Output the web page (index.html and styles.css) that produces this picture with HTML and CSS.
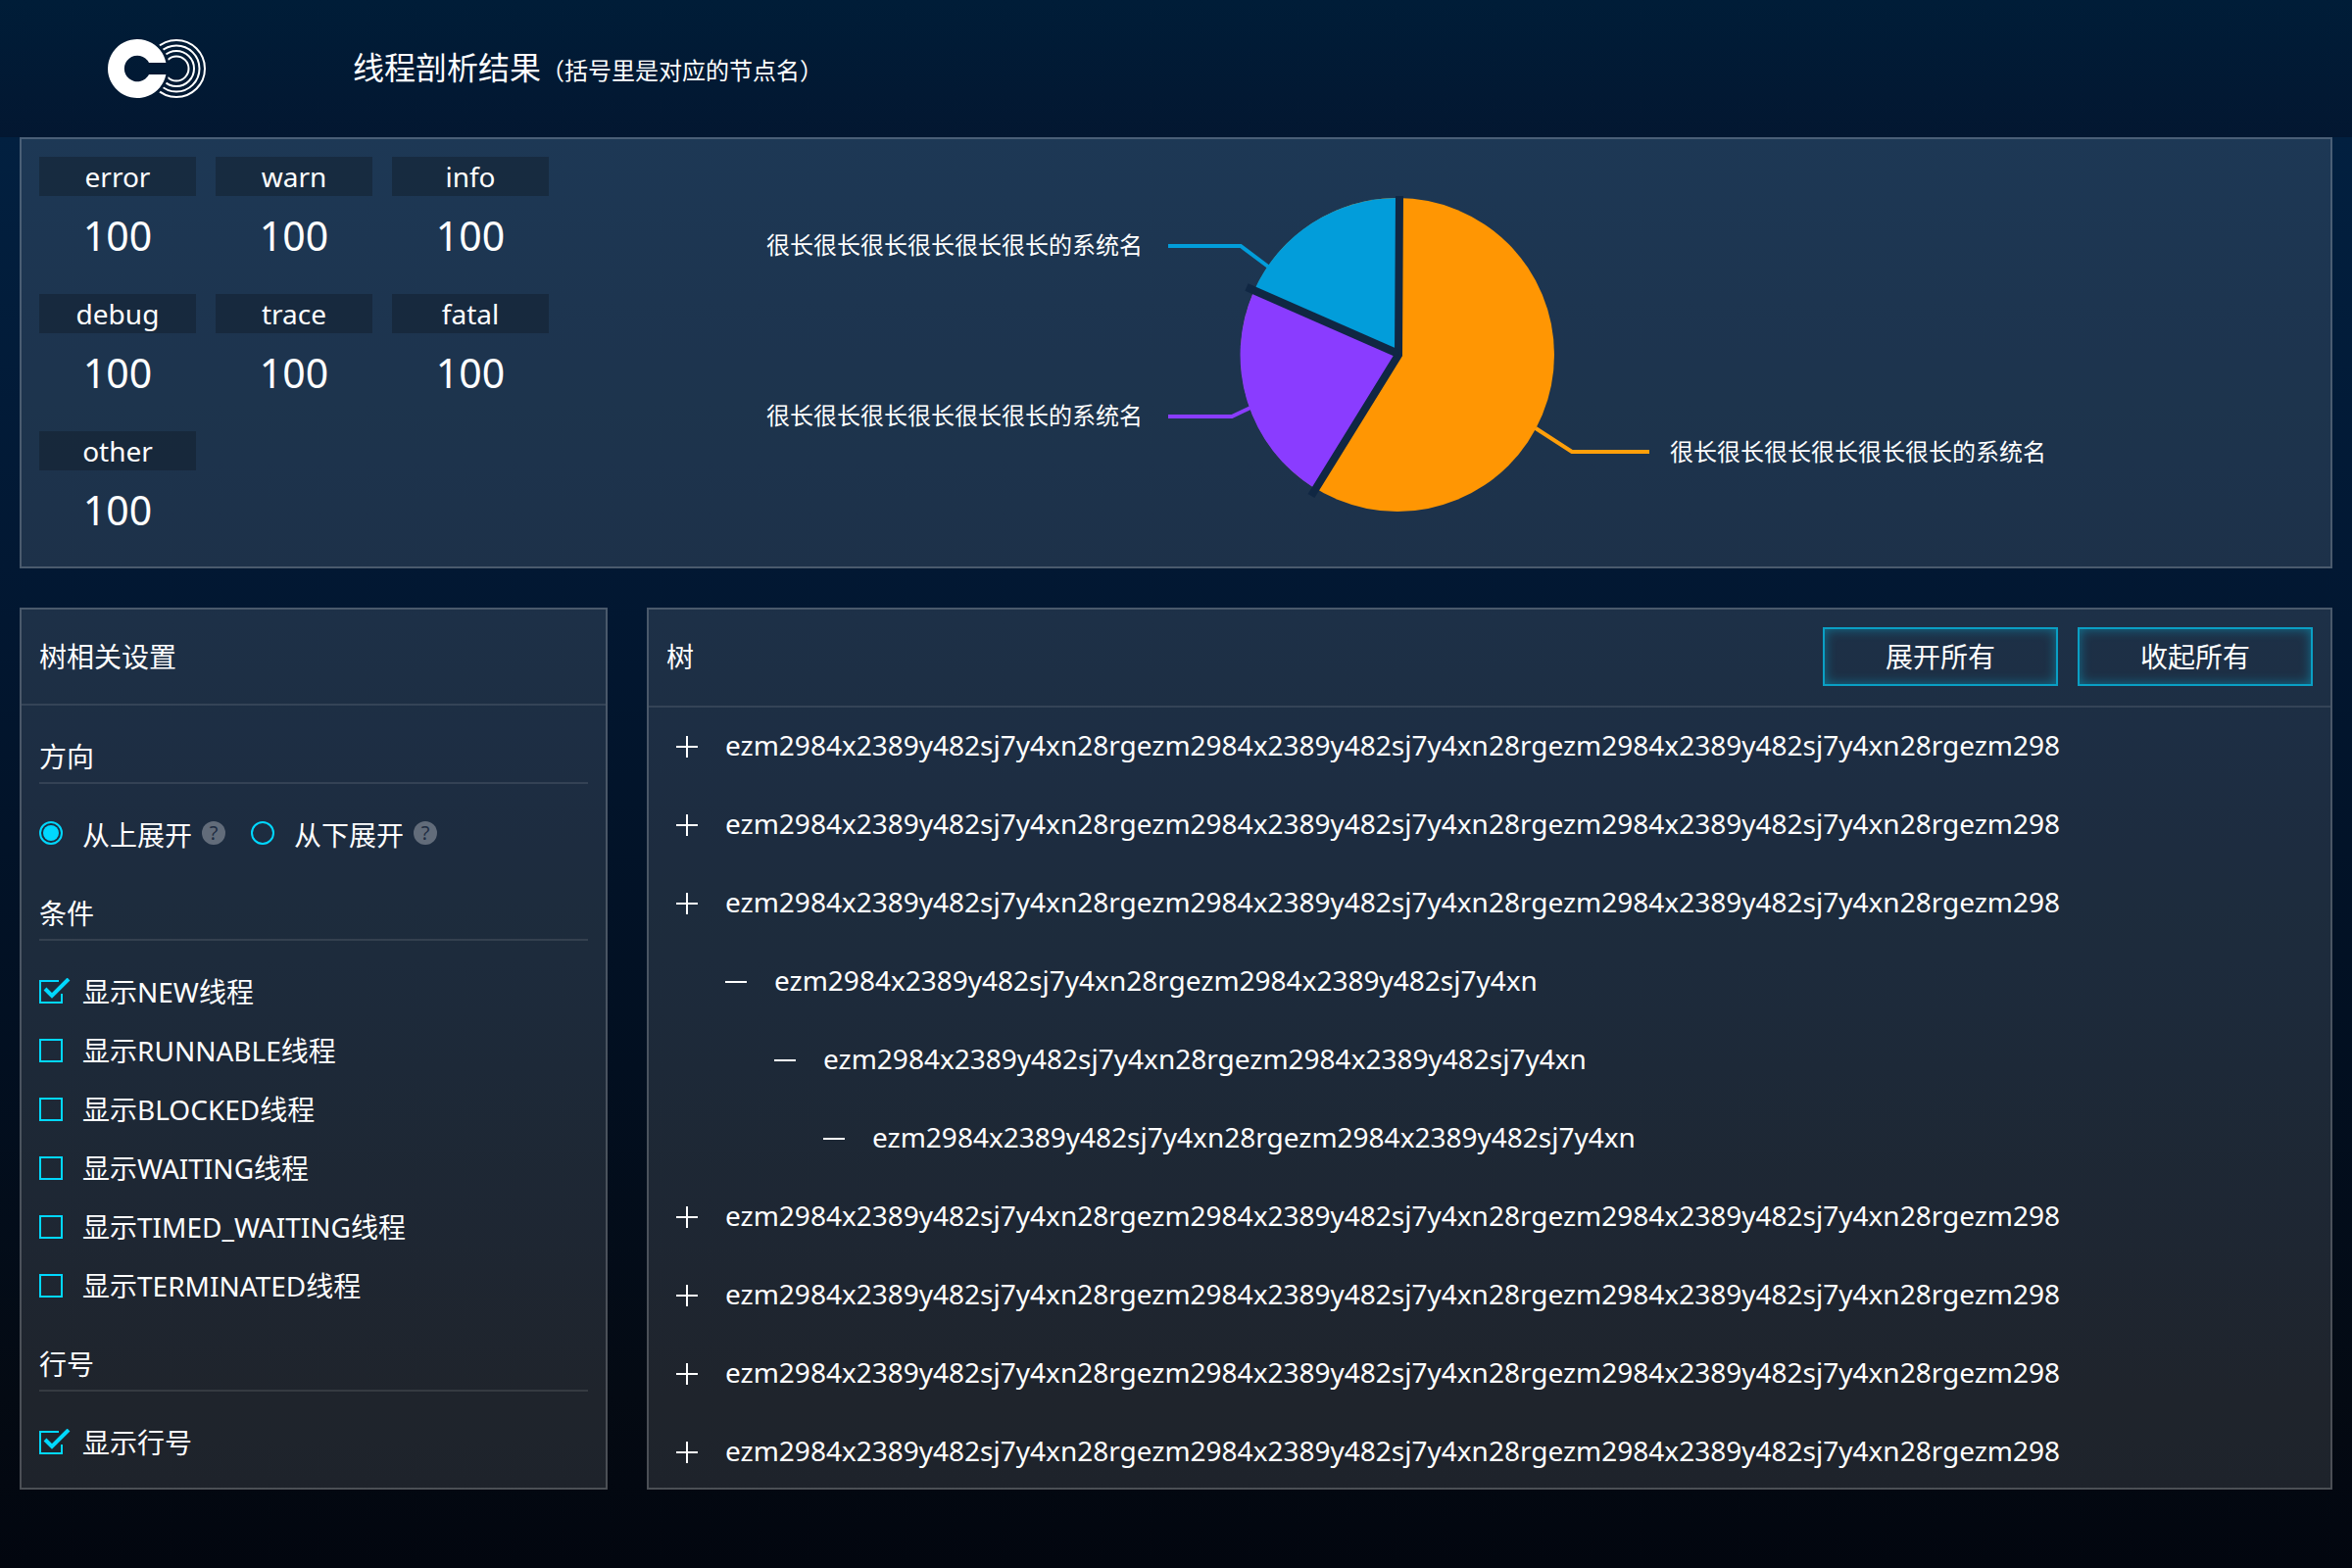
FILE: index.html
```html
<!DOCTYPE html>
<html lang="zh-CN">
<head>
<meta charset="utf-8">
<meta name="viewport" content="width=device-width, initial-scale=1">
<title>线程剖析结果</title>
<link rel="stylesheet" href="styles.css">
</head>
<body>
<header class="topbar">
  <svg class="logo" viewBox="0 0 100 60" aria-hidden="true">
    <defs>
      <mask id="ring-cut">
        <rect width="100" height="60" fill="#fff"/>
        <circle cx="30" cy="30" r="33" fill="#000"/>
      </mask>
    </defs>
    <path fill="#fff" d="M59.4 24A30 30 0 1 0 59.4 36H42A13.3 13.3 0 1 1 42 24Z"/>
    <g mask="url(#ring-cut)" fill="none" stroke="#fff" stroke-width="2">
      <circle cx="70" cy="30" r="29"/>
      <circle cx="70" cy="30" r="23.5"/>
      <circle cx="70" cy="30" r="18"/>
      <circle cx="70" cy="30" r="12.5"/>
    </g>
  </svg>
  <h1 class="title">线程剖析结果<span class="subtitle"><span class="paren" lang="zh-TW">（</span>括号里是对应的节点名<span class="paren" lang="zh-TW">）</span></span></h1>
</header>

<main class="content">
  <section class="panel overview">
    <dl class="stats">
      <div class="stat"><dt>error</dt><dd>100</dd></div>
      <div class="stat"><dt>warn</dt><dd>100</dd></div>
      <div class="stat"><dt>info</dt><dd>100</dd></div>
      <div class="stat"><dt>debug</dt><dd>100</dd></div>
      <div class="stat"><dt>trace</dt><dd>100</dd></div>
      <div class="stat"><dt>fatal</dt><dd>100</dd></div>
      <div class="stat"><dt>other</dt><dd>100</dd></div>
    </dl>
    <div class="chart">
      <svg class="pie" viewBox="780 160 1320 400" role="img" aria-label="系统占比">
        <circle cx="1426" cy="362" r="160" fill="#ff9603"/>
        <path fill="#8a3cff" d="M1426 362L1341 498A160 160 0 0 1 1279 298Z"/>
        <path fill="#029dda" d="M1426 362L1279 298A160 160 0 0 1 1428 202Z"/>
        <g fill="none" stroke="#102743" stroke-width="8">
          <path d="M1428 200L1427 362L1338 506"/>
          <path d="M1427 361L1272 293"/>
        </g>
        <g fill="none" stroke-width="4">
          <path stroke="#029dda" d="M1192 251H1266L1294 272"/>
          <path stroke="#8a3cff" d="M1192 425H1257L1276 416"/>
          <path stroke="#ff9f0a" d="M1567 437L1604 461H1683"/>
        </g>
        <text class="pie-label" x="782" y="259">很长很长很长很长很长很长的系统名</text>
        <text class="pie-label" x="782" y="433">很长很长很长很长很长很长的系统名</text>
        <text class="pie-label" x="1704" y="470">很长很长很长很长很长很长的系统名</text>
      </svg>
    </div>
  </section>

  <div class="columns">
    <form class="panel settings">
      <div class="panel-head"><h2>树相关设置</h2></div>
      <div class="settings-body">
        <h3 class="group-title">方向</h3>
        <div class="group radios">
          <label class="option"><input class="radio" type="radio" name="direction" checked>从上展开<span class="help">?</span></label>
          <label class="option"><input class="radio" type="radio" name="direction">从下展开<span class="help">?</span></label>
        </div>
        <h3 class="group-title">条件</h3>
        <div class="group">
          <label class="option"><input class="check" type="checkbox" checked>显示NEW线程</label>
          <label class="option"><input class="check" type="checkbox">显示RUNNABLE线程</label>
          <label class="option"><input class="check" type="checkbox">显示BLOCKED线程</label>
          <label class="option"><input class="check" type="checkbox">显示WAITING线程</label>
          <label class="option"><input class="check" type="checkbox">显示TIMED_WAITING线程</label>
          <label class="option"><input class="check" type="checkbox">显示TERMINATED线程</label>
        </div>
        <h3 class="group-title">行号</h3>
        <div class="group">
          <label class="option"><input class="check" type="checkbox" checked>显示行号</label>
        </div>
      </div>
    </form>

    <section class="panel tree-panel">
      <div class="panel-head">
        <h2>树</h2>
        <div class="actions">
          <button class="action" type="button">展开所有</button>
          <button class="action" type="button">收起所有</button>
        </div>
      </div>
      <ul class="tree">
        <li><div class="node"><button class="toggle plus" type="button" aria-label="展开"></button>ezm2984x2389y482sj7y4xn28rgezm2984x2389y482sj7y4xn28rgezm2984x2389y482sj7y4xn28rgezm298</div></li>
        <li><div class="node"><button class="toggle plus" type="button" aria-label="展开"></button>ezm2984x2389y482sj7y4xn28rgezm2984x2389y482sj7y4xn28rgezm2984x2389y482sj7y4xn28rgezm298</div></li>
        <li><div class="node"><button class="toggle plus" type="button" aria-label="展开"></button>ezm2984x2389y482sj7y4xn28rgezm2984x2389y482sj7y4xn28rgezm2984x2389y482sj7y4xn28rgezm298</div>
          <ul class="branch">
            <li><div class="node"><button class="toggle" type="button" aria-label="收起"></button>ezm2984x2389y482sj7y4xn28rgezm2984x2389y482sj7y4xn</div>
              <ul class="branch">
                <li><div class="node"><button class="toggle" type="button" aria-label="收起"></button>ezm2984x2389y482sj7y4xn28rgezm2984x2389y482sj7y4xn</div>
                  <ul class="branch">
                    <li><div class="node"><button class="toggle" type="button" aria-label="收起"></button>ezm2984x2389y482sj7y4xn28rgezm2984x2389y482sj7y4xn</div></li>
                  </ul>
                </li>
              </ul>
            </li>
          </ul>
        </li>
        <li><div class="node"><button class="toggle plus" type="button" aria-label="展开"></button>ezm2984x2389y482sj7y4xn28rgezm2984x2389y482sj7y4xn28rgezm2984x2389y482sj7y4xn28rgezm298</div></li>
        <li><div class="node"><button class="toggle plus" type="button" aria-label="展开"></button>ezm2984x2389y482sj7y4xn28rgezm2984x2389y482sj7y4xn28rgezm2984x2389y482sj7y4xn28rgezm298</div></li>
        <li><div class="node"><button class="toggle plus" type="button" aria-label="展开"></button>ezm2984x2389y482sj7y4xn28rgezm2984x2389y482sj7y4xn28rgezm2984x2389y482sj7y4xn28rgezm298</div></li>
        <li><div class="node"><button class="toggle plus" type="button" aria-label="展开"></button>ezm2984x2389y482sj7y4xn28rgezm2984x2389y482sj7y4xn28rgezm2984x2389y482sj7y4xn28rgezm298</div></li>
      </ul>
    </section>
  </div>
</main>
</body>
</html>
```

FILE: styles.css
```css
* {
  box-sizing: border-box;
}

body {
  margin: 0;
  min-height: 100vh;
  display: flex;
  flex-direction: column;
  background: #02060f;
  color: #fff;
  font: 28px/40px "Noto Sans", "Noto Sans CJK SC", sans-serif;
}

h1, h2, h3, dl, dd, ul {
  margin: 0;
  padding: 0;
  font-size: inherit;
  font-weight: inherit;
}

ul {
  list-style: none;
}

.topbar {
  height: 140px;
  padding-left: 110px;
  display: flex;
  align-items: center;
  gap: 150px;
  background: linear-gradient(#001d38, #031731);
}

.logo {
  width: 100px;
  height: 60px;
}

.title {
  font-size: 32px;
}

.subtitle {
  font-size: 24px;
}

.paren {
  font-family: "Noto Sans CJK TC", sans-serif;
}

.content {
  flex: 1;
  padding: 0 20px 80px;
  display: flex;
  flex-direction: column;
  gap: 40px;
  background: linear-gradient(#022040, #021833 30%, #020f20 65%, #040a13 88%, #02060f);
}

.panel {
  background: rgba(255, 255, 255, 0.11);
  border: 2px solid rgba(255, 255, 255, 0.2);
}

.overview {
  display: flex;
  padding: 18px;
}

.stats {
  display: grid;
  grid-template-columns: repeat(3, 160px);
  gap: 20px;
}

.stat {
  text-align: center;
}

.stat dt {
  background: rgba(16, 24, 36, 0.4);
}

.stat dd {
  font-size: 41px;
  line-height: 80px;
}

.chart {
  flex: 1;
  padding-right: 40px;
  display: flex;
  justify-content: center;
}

.pie {
  width: 1320px;
  height: 400px;
}

.pie-label {
  font-size: 24px;
  fill: #fff;
}

.columns {
  display: flex;
  gap: 40px;
}

.settings {
  width: 600px;
}

.tree-panel {
  flex: 1;
}

.panel-head {
  padding: 18px;
  display: flex;
  align-items: center;
  justify-content: space-between;
  min-height: 98px;
  border-bottom: 2px solid rgba(255, 255, 255, 0.1);
}

.tree-panel .panel-head {
  padding-bottom: 20px;
}

.actions {
  display: flex;
  gap: 20px;
}

.action {
  width: 240px;
  height: 60px;
  padding: 0;
  color: inherit;
  font: inherit;
  background: transparent;
  border: 2px solid #0a9fc4;
  box-shadow: inset 0 0 12px rgba(0, 216, 255, 0.4);
}

.settings-body {
  padding: 2px 18px 16px;
}

.group-title {
  padding: 30px 0 6px;
  border-bottom: 2px solid rgba(255, 255, 255, 0.1);
}

.group {
  padding-top: 22px;
}

.radios {
  display: flex;
  gap: 26px;
}

.option {
  height: 60px;
  display: flex;
  align-items: center;
}

.radio {
  appearance: none;
  width: 24px;
  height: 24px;
  margin: 0 20px 4px 0;
  border: 2px solid #00d8ff;
  border-radius: 50%;
}

.radio:checked {
  background: #00d8ff;
  background-clip: content-box;
  padding: 2px;
}

.help {
  width: 24px;
  height: 24px;
  margin: 0 0 4px 10px;
  border-radius: 50%;
  background: #626c7a;
  color: #1e2d42;
  font-size: 20px;
  line-height: 24px;
  text-align: center;
}

.check {
  appearance: none;
  width: 32px;
  height: 28px;
  margin: 0 12px 0 0;
  background: url("data:image/svg+xml,%3Csvg xmlns='http://www.w3.org/2000/svg' width='32' height='28' fill='none' stroke='%2300d8ff' stroke-width='2'%3E%3Cpath d='M1 3H23V25H1Z'/%3E%3C/svg%3E");
}

.check:checked {
  background: url("data:image/svg+xml,%3Csvg xmlns='http://www.w3.org/2000/svg' width='32' height='28' fill='none' stroke='%2300d8ff'%3E%3Cpath stroke-width='2' d='M20 3H1V25H23V16'/%3E%3Cpath stroke-width='4' d='M6 11L13 18L30 1'/%3E%3C/svg%3E");
}

.tree {
  padding: 18px 28px;
  display: grid;
  gap: 40px;
}

.branch {
  padding: 40px 0 0 50px;
}

.node {
  display: flex;
  align-items: center;
}

.toggle {
  width: 22px;
  height: 22px;
  margin: 4px 28px 0 0;
  padding: 0;
  border: 0;
  background: linear-gradient(#fff, #fff) center / 22px 2px no-repeat;
}

.plus {
  background: linear-gradient(#fff, #fff) center / 22px 2px no-repeat, linear-gradient(#fff, #fff) center / 2px 22px no-repeat;
}
```
